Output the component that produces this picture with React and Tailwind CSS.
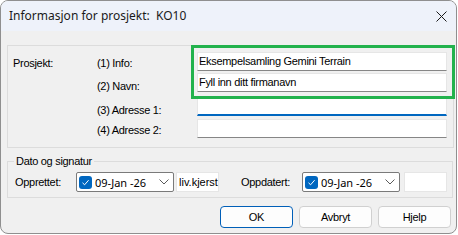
import React from "react";

const ms = "font-['Liberation_Sans',Arial,sans-serif] tracking-[-0.3px]";
const ui = "font-['Noto_Sans','Open_Sans',sans-serif]";

function TextField({ value, focused }) {
  return (
    <div
      className={`w-[250px] h-[19px] bg-white border border-[#e6e6e6] ${
        focused ? "border-b-2 border-b-[#0067c0]" : "border-b-[#868686]"
      } flex items-center pl-[1px] text-[11px] text-black ${ms} leading-none`}
    >
      {value}
    </div>
  );
}

function Check() {
  return (
    <span className="w-[13px] h-[13px] rounded-[3px] bg-[#0067c0] flex items-center justify-center">
      <svg width="9" height="9" viewBox="0 0 9 9">
        <path d="M1.5 4.8 L3.6 6.8 L7.6 2.2" fill="none" stroke="white" strokeWidth="1" />
      </svg>
    </span>
  );
}

function DatePicker() {
  return (
    <div className="w-[98px] h-[20px] bg-white border border-[#7a7a7a] rounded-[2px] flex items-center pl-[2px] pr-[4px]">
      <Check />
      <span className={`ml-[3px] text-[11px] text-black ${ui} leading-none`}>09-Jan -26</span>
      <svg className="ml-auto" width="10" height="6" viewBox="0 0 10 6">
        <path d="M0.5 0.5 L5 5 L9.5 0.5" fill="none" stroke="#5a5a5a" strokeWidth="1" />
      </svg>
    </div>
  );
}

function Row({ left, label, children, mt, pt }) {
  return (
    <div className={`flex items-start h-[19px] ${mt}`}>
      <div className={`w-[89px] pl-[5px] ${pt} text-[11px] ${ms} leading-[13px] text-black`}>{left}</div>
      <div className={`w-[100px] ${pt} text-[11px] ${ms} leading-[13px] text-black`}>{label}</div>
      {children}
    </div>
  );
}

function Button({ children, primary }) {
  return (
    <button
      className={`w-[73px] h-[22px] rounded-[4px] bg-[#fdfdfd] border ${
        primary ? "border-[#005fb8]" : "border-[#d0d0d0]"
      } text-[11px] ${ms} text-black leading-none flex items-center justify-center`}
    >
      {children}
    </button>
  );
}

export default function App() {
  return (
    <div className="w-[458px] h-[235px] bg-white">
      <div className="w-[457px] h-[234px] rounded-[8px] border border-[#8f8f8f] overflow-hidden bg-[#f0f0f0] flex flex-col">
        <div className="h-[30px] shrink-0 bg-[#eef2fa] flex items-center pl-[8px]">
          <span className={`text-[12px] ${ui} text-[#1a1a1a] whitespace-pre`}>Informasjon for prosjekt:  KO10</span>
          <svg className="ml-auto mr-[9px]" width="11" height="11" viewBox="0 0 11 11">
            <path d="M0.5 0.5 L10.5 10.5 M10.5 0.5 L0.5 10.5" stroke="#1a1a1a" strokeWidth="1" />
          </svg>
        </div>

        <div className="relative mt-[14px] ml-[6px] w-[447px] h-[103px] shrink-0 border border-[#dcdcdc]">
          <Row left="Prosjekt:" label="(1) Info:" mt="mt-[6px]" pt="pt-[5px]">
            <TextField value="Eksempelsamling Gemini Terrain" />
          </Row>
          <Row label="(2) Navn:" mt="mt-[2px]" pt="pt-[7px]">
            <TextField value="Fyll inn ditt firmanavn" />
          </Row>
          <Row label="(3) Adresse 1:" mt="mt-[5px]" pt="pt-[7px]">
            <TextField value="" focused />
          </Row>
          <Row label="(4) Adresse 2:" mt="mt-[3px]" pt="pt-[5px]">
            <TextField value="" />
          </Row>
          <div className="absolute left-[183px] -top-[1px] w-[264px] h-[54px] border-[3px] border-[#22b24c]" />
        </div>

        <div className="mt-[13px] ml-[6px] w-[446px] h-[37px] shrink-0 border border-[#dcdcdc] flex flex-col">
          <span className={`-mt-[8px] ml-[6px] px-[2px] self-start bg-[#f0f0f0] text-[11px] ${ms} leading-[14px] text-black`}>
            Dato og signatur
          </span>
          <div className="mt-[4px] flex items-center">
            <div className={`w-[68px] pl-[7px] text-[11px] ${ms} text-black`}>Opprettet:</div>
            <DatePicker />
            <div className="ml-[2px] w-[43px] h-[20px] bg-white border border-[#e6e6e6] flex items-center pl-[2px] text-[11px] font-['Liberation_Sans',Arial,sans-serif] text-black">
              liv.kjerst
            </div>
            <div className={`ml-[22px] w-[61px] text-[11px] ${ms} text-black`}>Oppdatert:</div>
            <DatePicker />
            <div className="ml-[4px] w-[43px] h-[20px] bg-white border border-[#e6e6e6]" />
          </div>
        </div>

        <div className="mt-[8px] ml-[219px] flex gap-[6px]">
          <Button primary>OK</Button>
          <Button>Avbryt</Button>
          <Button>Hjelp</Button>
        </div>
      </div>
    </div>
  );
}
